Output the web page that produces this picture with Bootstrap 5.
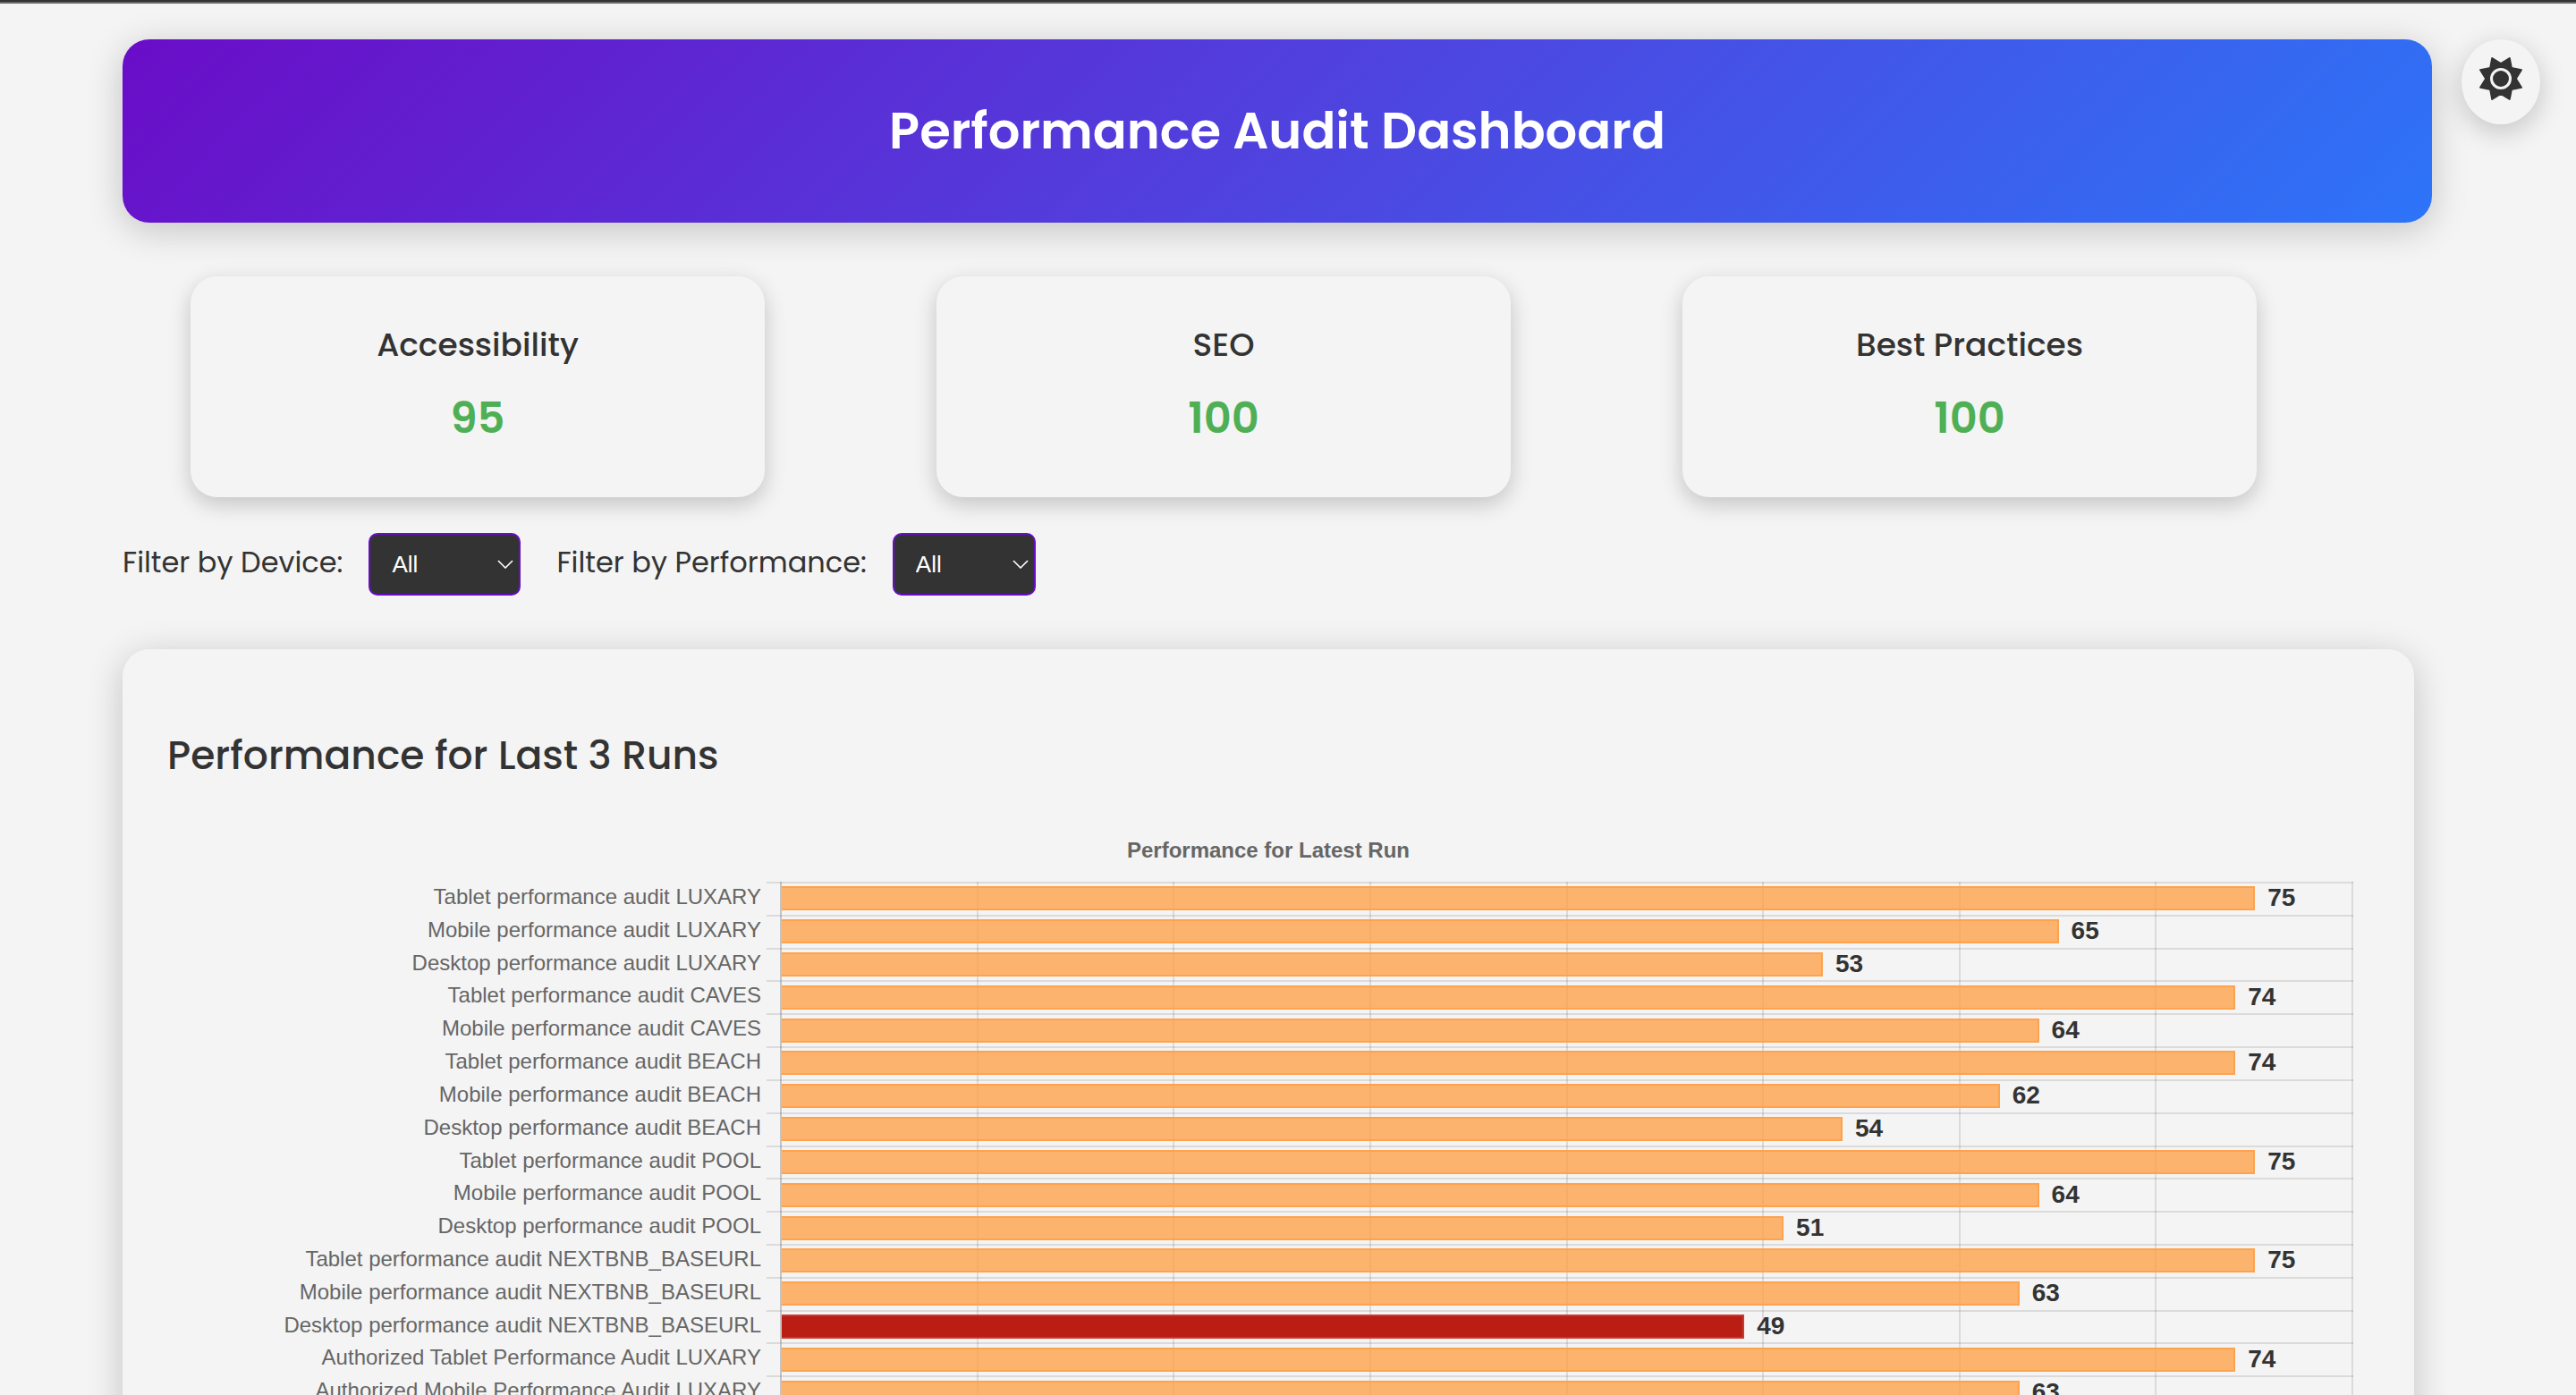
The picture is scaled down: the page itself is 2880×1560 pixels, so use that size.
<!DOCTYPE html>
<html lang="en">
<head>
<meta charset="utf-8">
<meta name="viewport" content="width=device-width, initial-scale=1">
<title>Performance Audit Dashboard</title>
<link href="https://cdn.jsdelivr.net/npm/bootstrap@5.3.0/dist/css/bootstrap.min.css" rel="stylesheet">
<style>
:root { --page: #f4f4f4; --ink: #333; --violet: #6a0dc8; --radius: 30px; }
body { background: var(--page); color: var(--ink); font-family: Poppins, Inter, sans-serif; }
.top-strip { height: 4px; background: #666; border-top: 2px solid #333; }
.page { padding: 40px 161px 80px 137px; }
.hero { padding: 60px; border-radius: var(--radius); color: #fff; background: linear-gradient(135deg, var(--violet), #5042de, #2d74f8); box-shadow: 0 8px 40px rgba(0,0,0,.2); }
.hero h1 { font-size: 56px; line-height: 85px; font-weight: 600; }
.theme-toggle { top: 44px; right: 40px; padding: 20px 20px 27px; background: var(--page); color: var(--ink); border-radius: 50%; box-shadow: 0 8px 30px rgba(0,0,0,.2); }
.scores { padding: 60px 196px 40px 76px; }
.scores .row { --bs-gutter-x: 192px; }
.score { padding: 50px 20px 45px; border-radius: var(--radius); background: var(--page); box-shadow: 0 8px 24px rgba(0,0,0,.2); }
.score h2 { font-size: 36px; line-height: 54px; font-weight: 500; margin-bottom: 12px; }
.score p { font-size: 48px; line-height: 86px; font-weight: 600; color: #4faf55; }
.filters { gap: 40px; margin-bottom: 60px; }
.filter { gap: 29px; }
.filter label { font-size: 32px; line-height: 48px; margin-bottom: 4px; }
.filter select { height: 70px; padding: 0 44px 0 24px; font: 26px "Liberation Sans", Arial, sans-serif; color: #fff; border: 2px solid var(--violet); border-radius: 10px; background: #333 url("data:image/svg+xml,%3csvg xmlns='http://www.w3.org/2000/svg' viewBox='0 0 18 10'%3e%3cpath fill='none' stroke='%23fff' stroke-width='1.6' d='M1 1l8 8 8-8'/%3e%3c/svg%3e") no-repeat right 6px center / 18px 10px; }
#device { width: 170px; }
#level { width: 160px; }
.panel { margin-right: 20px; padding: 86px 50px 60px; border-radius: var(--radius); background: var(--page); box-shadow: 0 8px 40px rgba(0,0,0,.2); }
.panel h2 { font-size: 44px; line-height: 66px; font-weight: 500; margin-bottom: 58px; }
.chart { font-family: "Liberation Sans", Arial, sans-serif; color: #666; }
.chart figcaption { font-size: 24px; line-height: 30px; font-weight: 700; margin-bottom: 20px; }
.plot { display: grid; height: 589px; padding-right: 18px; }
.plot > * { grid-area: 1 / 1; }
.grid-lines { margin-left: 685px; border-left: 2px solid #c4c4c4; }
.grid-lines i { flex: 1 1 0; border-right: 2px solid rgba(0,0,0,.1); }
.bar-row { flex: 1 1 0; gap: 6px; min-height: 0; }
.bar-name { width: 664px; font-size: 24px; line-height: 34px; }
.track { border-top: 2px solid rgba(0,0,0,.1); padding: 0 0 1px 17px; gap: 14px; }
.bar { height: 27px; background: rgba(252,160,70,.78); border: 2px solid #ffa24d; border-left: 0; }
.bar.poor { background: #b91d14; border-color: #c33b33; }
.bar-value { font-size: 28px; line-height: 30px; padding-bottom: 1px; font-weight: 700; color: var(--ink); width: 0; }
</style>
</head>
<body>
<div class="top-strip"></div>
<button type="button" class="theme-toggle btn border-0 position-absolute lh-1" aria-label="Toggle theme">
  <svg class="d-block" width="48" height="48" viewBox="-24 -24 48 48" aria-hidden="true">
    <path fill="currentColor" stroke="currentColor" stroke-width="2" stroke-linejoin="round" d="M16.8 0L22.9 9.8L11.9 11.9L9.8 22.9L0 16.8L-9.8 22.9L-11.9 11.9L-22.9 9.8L-16.8 0L-22.9 -9.8L-11.9 -11.9L-9.8 -22.9L0 -16.8L9.8 -22.9L11.9 -11.9L22.9 -9.8Z"/>
    <circle r="10.5" fill="none" stroke="#f4f4f4" stroke-width="3"/>
  </svg>
</button>
<main class="page">
  <header class="hero text-center"><h1 class="mb-0">Performance Audit Dashboard</h1></header>
  <section class="scores">
    <div class="row text-center">
      <div class="col-4"><div class="score"><h2>Accessibility</h2><p class="mb-0">95</p></div></div>
      <div class="col-4"><div class="score"><h2>SEO</h2><p class="mb-0">100</p></div></div>
      <div class="col-4"><div class="score"><h2>Best Practices</h2><p class="mb-0">100</p></div></div>
    </div>
  </section>
  <form class="filters d-flex align-items-center">
    <div class="filter d-flex align-items-center"><label for="device">Filter by Device:</label><select id="device" class="form-select"><option>All</option></select></div>
    <div class="filter d-flex align-items-center"><label for="level">Filter by Performance:</label><select id="level" class="form-select"><option>All</option></select></div>
  </form>
  <section class="panel">
    <h2>Performance for Last 3 Runs</h2>
    <figure class="chart mb-0">
      <figcaption class="text-center">Performance for Latest Run</figcaption>
      <div class="plot">
        <div class="grid-lines d-flex"><i></i><i></i><i></i><i></i><i></i><i></i><i></i><i></i></div>
        <div class="d-flex flex-column" id="bars"></div>
      </div>
    </figure>
  </section>
</main>
<script src="https://cdn.jsdelivr.net/npm/bootstrap@5.3.0/dist/js/bootstrap.bundle.min.js"></script>
<script>
const runs = [
  ["Tablet performance audit LUXARY", 75], ["Mobile performance audit LUXARY", 65], ["Desktop performance audit LUXARY", 53],
  ["Tablet performance audit CAVES", 74], ["Mobile performance audit CAVES", 64],
  ["Tablet performance audit BEACH", 74], ["Mobile performance audit BEACH", 62], ["Desktop performance audit BEACH", 54],
  ["Tablet performance audit POOL", 75], ["Mobile performance audit POOL", 64], ["Desktop performance audit POOL", 51],
  ["Tablet performance audit NEXTBNB_BASEURL", 75], ["Mobile performance audit NEXTBNB_BASEURL", 63], ["Desktop performance audit NEXTBNB_BASEURL", 49],
  ["Authorized Tablet Performance Audit LUXARY", 74], ["Authorized Mobile Performance Audit LUXARY", 63]
];
// The axis runs from 0 to 80; scores under 50 are drawn as poor.
document.getElementById("bars").innerHTML = runs.map(([name, score]) =>
  `<div class="bar-row d-flex"><div class="bar-name flex-shrink-0 text-end text-nowrap">${name}</div>` +
  `<div class="track d-flex flex-fill align-items-center"><div class="bar flex-shrink-0 ${score < 50 ? "poor" : ""}" style="width:${score / 0.8}%"></div><span class="bar-value">${score}</span></div></div>`
).join("");
</script>
</body>
</html>
